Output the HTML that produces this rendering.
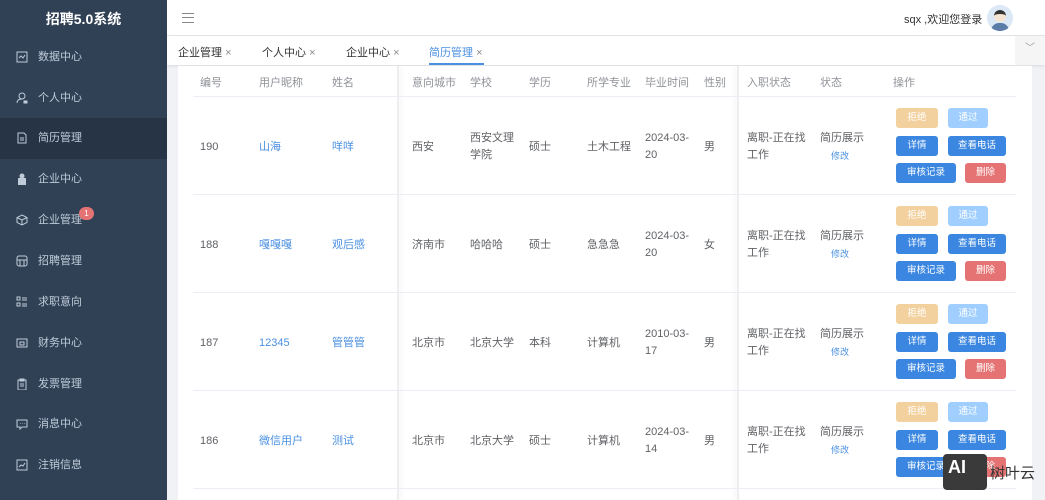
<!DOCTYPE html><html><head><meta charset="utf-8"><style>
*{margin:0;padding:0;box-sizing:border-box}
body{width:1045px;height:500px;overflow:hidden;position:relative;font-family:"Liberation Sans","Noto Sans CJK SC",sans-serif;background:#f0f2f5;font-size:11px;color:#606266}
.a{position:absolute}
#side{left:0;top:0;width:167px;height:500px;background:#304156}
.mi{position:absolute;left:0;width:167px;height:41px;color:#bfcbd9;font-size:11px;line-height:41px;padding-left:38px}
.mi svg{position:absolute;left:16px;top:14px}
.t{position:absolute;white-space:nowrap}
.b{position:absolute;height:20px;border-radius:3px;color:#fff;font-size:9.5px;line-height:20px;text-align:center}
.lk{color:#4a90e2}
</style></head><body>
<div id="side" class="a">
<div class="t" style="left:0;width:167px;top:9px;text-align:center;color:#fff;font-size:14px;font-weight:bold">招聘5.0系统</div>
<div class="mi" style="top:37px"><svg width="12" height="12" viewBox="0 0 12 12" fill="none" stroke="#bfcbd9"><rect x="1" y="1" width="10" height="10"/><path d="M3 7l2-2 2 2 2-3"/></svg>数据中心</div>
<div class="mi" style="top:78px"><svg width="12" height="12" viewBox="0 0 12 12" fill="none" stroke="#bfcbd9"><circle cx="6" cy="4" r="3"/><path d="M1 11c0-3 2-4 5-4"/><rect x="8" y="9" width="3" height="2" fill="#bfcbd9"/></svg>个人中心</div>
<div class="mi" style="top:118px;background:#263445"><svg width="12" height="12" viewBox="0 0 12 12" fill="none" stroke="#bfcbd9"><path d="M2 1h6l2 2v8H2z M4 6h4M4 8h4"/></svg>简历管理</div>
<div class="mi" style="top:159px"><svg width="12" height="12" viewBox="0 0 12 12" fill="#bfcbd9"><rect x="2" y="5" width="8" height="7"/><circle cx="6" cy="3" r="2.5"/></svg>企业中心</div>
<div class="mi" style="top:200px"><svg width="12" height="12" viewBox="0 0 12 12" fill="none" stroke="#bfcbd9"><path d="M6 1l5 2.5v5L6 11 1 8.5v-5zM1 3.5L6 6l5-2.5M6 6v5"/></svg>企业管理</div>
<div class="a" style="left:79px;top:207px;width:15px;height:13px;border-radius:7px;background:#e57373;color:#fff;font-size:8px;text-align:center;line-height:13px">1</div>
<div class="mi" style="top:241px"><svg width="12" height="12" viewBox="0 0 12 12" fill="none" stroke="#bfcbd9"><rect x="1" y="1" width="10" height="10" rx="2"/><path d="M1 5h10M4 5v6M8 5v6"/></svg>招聘管理</div>
<div class="mi" style="top:282px"><svg width="12" height="12" viewBox="0 0 12 12" fill="none" stroke="#bfcbd9"><rect x="1" y="1" width="3" height="3"/><rect x="1" y="7" width="3" height="3"/><path d="M6 2h5M6 4h5M6 8h5M6 10h5"/></svg>求职意向</div>
<div class="mi" style="top:323px"><svg width="12" height="12" viewBox="0 0 12 12" fill="none" stroke="#bfcbd9"><rect x="1" y="2" width="10" height="8"/><rect x="4" y="5" width="4" height="3"/></svg>财务中心</div>
<div class="mi" style="top:364px"><svg width="12" height="12" viewBox="0 0 12 12" fill="none" stroke="#bfcbd9"><rect x="2" y="2" width="8" height="10"/><path d="M4 1h4v2H4zM4 6h4M4 8h4"/></svg>发票管理</div>
<div class="mi" style="top:404px"><svg width="12" height="12" viewBox="0 0 12 12" fill="none" stroke="#bfcbd9"><path d="M1 2h10v7H6l-2 2V9H1z"/><path d="M4 5.5h.5M6 5.5h.5M8 5.5h.5"/></svg>消息中心</div>
<div class="mi" style="top:445px"><svg width="12" height="12" viewBox="0 0 12 12" fill="none" stroke="#bfcbd9"><rect x="1" y="1" width="10" height="10"/><path d="M3 8l2-2 2 1 2-3"/></svg>注销信息</div>
</div>
<div class="a" style="left:167px;top:0;width:878px;height:36px;background:#fff;border-bottom:1px solid #e6e6e6"></div>
<div class="a" style="left:182px;top:13px;width:12px;height:10px;border-top:1.5px solid #888;border-bottom:1.5px solid #888"><div style="margin-top:2.5px;border-top:1.5px solid #888"></div></div>
<div class="t" style="left:904px;top:11px;font-size:11px;color:#333">sqx ,欢迎您登录</div>
<div class="a" style="left:987px;top:5px;width:26px;height:26px;border-radius:13px;background:#dbe8f5;overflow:hidden"><div class="a" style="left:7px;top:5px;width:12px;height:12px;border-radius:6px;background:#f6e4d2;border-top:4px solid #333"></div><div class="a" style="left:4px;top:18px;width:18px;height:10px;border-radius:8px 8px 0 0;background:#5b7ca8"></div></div>
<div class="a" style="left:167px;top:36px;width:878px;height:29px;background:#fff;box-shadow:0 1px 3px rgba(0,0,0,.1)"></div>
<div class="t" style="left:178px;top:44px;color:#333">企业管理 <span style="color:#888">×</span></div>
<div class="t" style="left:262px;top:44px;color:#333">个人中心 <span style="color:#888">×</span></div>
<div class="t" style="left:346px;top:44px;color:#333">企业中心 <span style="color:#888">×</span></div>
<div class="t" style="left:429px;top:44px;color:#4a90e2">简历管理 <span style="color:#888">×</span></div>
<div class="a" style="left:429px;top:63px;width:55px;height:2px;background:#4a90e2"></div>
<div class="a" style="left:1015px;top:36px;width:30px;height:29px;background:#f5f5f5;color:#999;text-align:center;line-height:26px;font-size:10px">﹀</div>
<div class="a" style="left:178px;top:66px;width:854px;height:434px;background:#fff"></div>
<div class="a" style="left:397px;top:66px;width:2px;height:434px;background:#eee;box-shadow:2px 0 4px rgba(0,0,0,.06)"></div>
<div class="a" style="left:737px;top:66px;width:2px;height:434px;background:#eee;box-shadow:-2px 0 4px rgba(0,0,0,.06)"></div>
<div class="a" style="left:193px;top:96px;width:823px;height:1px;background:#ebeef5"></div>
<div class="a" style="left:193px;top:194px;width:823px;height:1px;background:#ebeef5"></div>
<div class="a" style="left:193px;top:292px;width:823px;height:1px;background:#ebeef5"></div>
<div class="a" style="left:193px;top:390px;width:823px;height:1px;background:#ebeef5"></div>
<div class="a" style="left:193px;top:488px;width:823px;height:1px;background:#ebeef5"></div>
<div style="color:#909399">
<div class="t" style="left:200px;top:74px">编号</div><div class="t" style="left:259px;top:74px">用户昵称</div><div class="t" style="left:332px;top:74px">姓名</div><div class="t" style="left:412px;top:74px">意向城市</div><div class="t" style="left:470px;top:74px">学校</div><div class="t" style="left:529px;top:74px">学历</div><div class="t" style="left:587px;top:74px">所学专业</div><div class="t" style="left:645px;top:74px">毕业时间</div><div class="t" style="left:704px;top:74px">性别</div><div class="t" style="left:747px;top:74px">入职状态</div><div class="t" style="left:820px;top:74px">状态</div><div class="t" style="left:893px;top:74px">操作</div>
</div>
<div id="rows"></div>
<script>
var d=[["190","山海","咩咩","西安","西安文理<br>学院","硕士","土木工程","2024-03-<br>20","男"],["188","嘎嘎嘎","观后感","济南市","哈哈哈","硕士","急急急","2024-03-<br>20","女"],["187","12345","管管管","北京市","北京大学","本科","计算机","2010-03-<br>17","男"],["186","微信用户","测试","北京市","北京大学","硕士","计算机","2024-03-<br>14","男"]];
var xs=[200,259,332,412,470,529,587,645,704],h="";
d.forEach(function(r,i){var y=97+i*98,c=y+49;
r.forEach(function(v,j){var two=v.indexOf("<br>")>0;h+='<div class="t'+(j==1||j==2?' lk':'')+'" style="left:'+xs[j]+'px;top:'+(two?c-16:c-7)+'px;line-height:17px;color:'+(j==1||j==2?'#4a90e2':'#606266')+'">'+v+'</div>';});
h+='<div class="t" style="left:747px;top:'+(c-16)+'px;line-height:17px">离职-正在找<br>工作</div>';
h+='<div class="t" style="left:820px;top:'+(c-17)+'px">简历展示</div><div class="t" style="left:831px;top:'+(c+3)+'px;font-size:9px;color:#4a90e2">修改</div>';
var by=y+11;
h+='<div class="b" style="left:896px;top:'+by+'px;width:42px;background:#f3d19e">拒绝</div><div class="b" style="left:948px;top:'+by+'px;width:40px;background:#a0cfff">通过</div>';
h+='<div class="b" style="left:896px;top:'+(by+28)+'px;width:42px;background:#3a86e0">详情</div><div class="b" style="left:948px;top:'+(by+28)+'px;width:58px;background:#3a86e0">查看电话</div>';
h+='<div class="b" style="left:896px;top:'+(by+55)+'px;width:60px;background:#3a86e0">审核记录</div><div class="b" style="left:965px;top:'+(by+55)+'px;width:41px;background:#e57373">删除</div>';
});
document.getElementById("rows").innerHTML=h;
</script>
<div class="a" style="left:943px;top:454px;width:44px;height:36px;border-radius:4px;background:#3a3a3a;color:#fff;font-weight:bold;font-size:18px;padding:3px 5px">AI</div>
<div class="t" style="left:990px;top:462px;font-size:15px;color:#333">树叶云</div>
</body></html>
